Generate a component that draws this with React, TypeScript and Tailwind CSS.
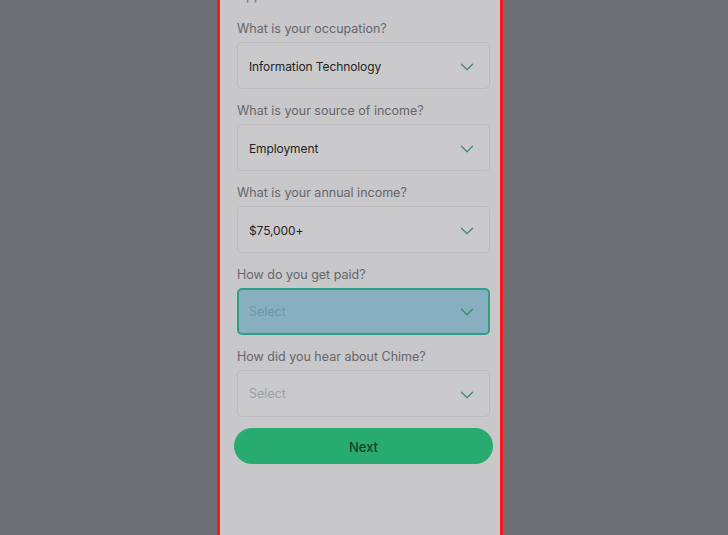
import { ChevronDown } from "lucide-react";

type Question = { label: string; value?: string; active?: boolean };

const questions: Question[] = [
    { label: "What is your occupation?", value: "Information Technology" },
    { label: "What is your source of income?", value: "Employment" },
    { label: "What is your annual income?", value: "$75,000+" },
    { label: "How do you get paid?", active: true },
    { label: "How did you hear about Chime?" },
];

export default function App() {
    return (
        <div className="w-[728px] h-[535px] bg-[#6f7075] pl-[217px] overflow-hidden font-['Inter',sans-serif]">
            <div className="w-[286px] h-full border-x-[3px] border-[#ff1414] bg-[#c8c7ca] overflow-hidden pl-[17px] flex flex-col">
                <p className="-mt-[14px] leading-[18px] text-[13px] text-[#6b6b70]">Applicant information</p>
                <div className="mt-[16px] flex flex-col">
                    {questions.map((q) => (
                        <Field key={q.label} {...q} />
                    ))}
                </div>
                <button className="-ml-[3px] -mt-[2px] w-[259px] h-[36px] rounded-full bg-[#27ab6f] text-[13px] font-medium text-[#1d3b2c] pt-[3px]">
                    Next
                </button>
            </div>
        </div>
    );
}

function Field({ label, value, active }: Question) {
    const textClass = value
        ? "text-[12px] tracking-[-0.1px] text-[#232326]"
        : active
          ? "text-[12.5px] text-[#6f97a8]"
          : "text-[12.5px] text-[#9a9ea5]";
    return (
        <div className="flex flex-col">
            <label className="leading-[18px] text-[12.5px] text-[#66666b]">{label}</label>
            <div
                className={
                    active
                        ? "mt-[4px] mb-[13px] w-[253px] h-[47px] rounded-[5px] border-2 border-[#2f9f86] bg-[#88afbf] flex items-center justify-between pl-[10px] pr-[10px] pt-[1px]"
                        : "mt-[4px] mb-[13px] w-[253px] h-[47px] rounded-[5px] border border-[#bbbbbe] bg-[#cacacc] flex items-center justify-between pl-[11px] pr-[11px] pt-[2px]"
                }
            >
                <span className={textClass}>{value ?? "Select"}</span>
                <ChevronDown size={22} strokeWidth={1.3} className="text-[#3c8a74]" />
            </div>
        </div>
    );
}
